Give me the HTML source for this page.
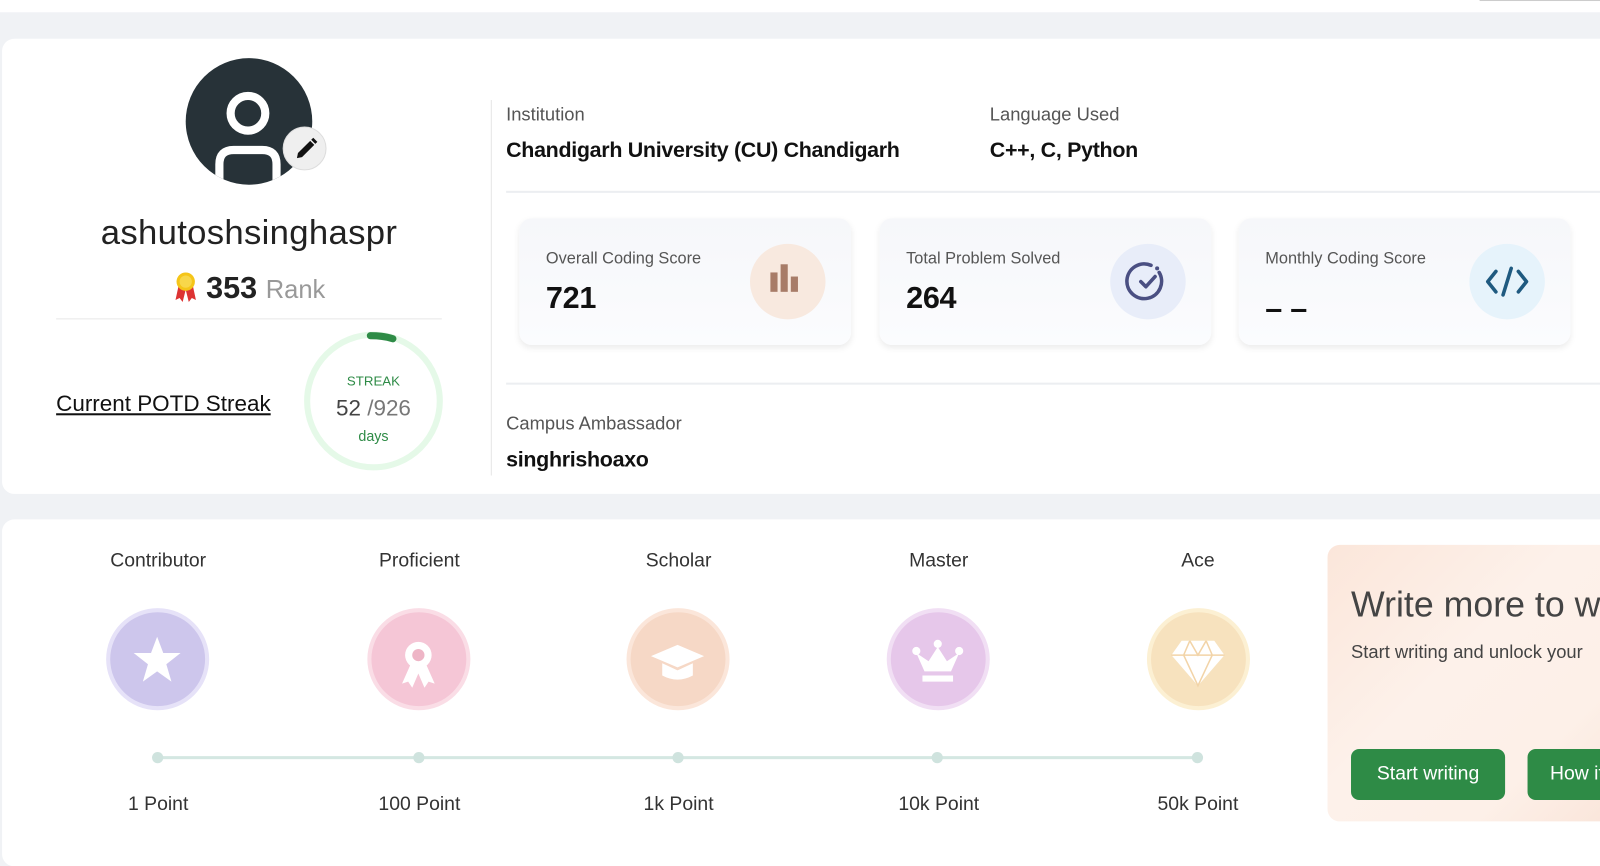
<!DOCTYPE html>
<html><head><meta charset="utf-8"><style>
*{box-sizing:border-box;margin:0;padding:0}
body{width:1600px;height:846px;overflow:hidden;background:#f0f2f5;font-family:"Liberation Sans",sans-serif;color:#222;position:relative}
#w{position:absolute;left:0;top:0;width:1568px;height:830px;transform:scale(1.0204);transform-origin:0 0}
.abs{position:absolute}
.topbar{left:0;top:0;width:1600px;height:12px;background:#fff}
.card{background:#fff;border-radius:12px}
.narrow{font-weight:bold;letter-spacing:-0.3px}
.lbl{font-size:18px;color:#555}
.sc{left:0;width:325px;height:124px;border-radius:12px;background:linear-gradient(#f6f7fa,#fbfcfe);box-shadow:0 3px 6px rgba(0,0,0,.08)}
.sc .t{position:absolute;left:26px;top:31px;font-size:16px;color:#555}
.sc .v{position:absolute;left:26px;top:62px;font-size:30px;color:#111}
.sc .ic{position:absolute;left:226px;top:25px;width:74px;height:74px;border-radius:50%}
.badge{width:101px;height:100px;border-radius:50%;top:596px}
.bt{top:539px;font-size:19px;color:#333;width:200px;text-align:center}
.pt{top:778px;font-size:19px;color:#333;width:200px;text-align:center}
.dot{top:737px;width:11px;height:11px;border-radius:50%;background:#cfe3de}
.btn{background:#2e8b46;color:#fff;font-size:19px;border-radius:8px;height:50px;line-height:50px;text-align:center}
</style></head><body>
<div id="w">
<div class="abs topbar"></div>
<div class="abs" style="left:1450px;top:0;width:150px;height:1px;background:#ccc"></div>
<div class="abs card" style="left:2px;top:38px;width:1610px;height:446px"></div>
<div class="abs card" style="left:2px;top:509px;width:1610px;height:340px"></div>

<div class="abs" style="left:182px;top:57px;width:124px;height:124px;border-radius:50%;background:#273238;overflow:hidden">
<svg width="124" height="124" viewBox="0 0 124 124"><circle cx="61" cy="54" r="17" fill="none" stroke="#fff" stroke-width="8"/><path d="M33 124 V104 Q33 90 47 90 H75 Q89 90 89 104 V124" fill="none" stroke="#fff" stroke-width="8"/></svg>
</div>
<div class="abs" style="left:277px;top:124px;width:43px;height:43px;border-radius:50%;background:#efefef;border:1px solid #ddd">
<svg width="43" height="43" viewBox="0 0 43 43"><path d="M13 30 L14 25 L26 13 L30 17 L18 29 Z" fill="#111"/><path d="M27 12 L29 10 L33 14 L31 16Z" fill="#111"/></svg>
</div>
<div class="abs" style="left:40px;top:209px;width:408px;text-align:center;font-size:34px;color:#222;letter-spacing:.3px">ashutoshsinghaspr</div>
<div class="abs" style="left:170px;top:264px;width:24px;height:34px">
<svg width="24" height="34" viewBox="0 0 24 34"><path d="M5 16 L2 30 L6 28 L9 32 L12 20Z M19 16 L22 30 L18 28 L15 32 L12 20Z" fill="#d33"/><circle cx="12" cy="12" r="9" fill="#f5c518"/><circle cx="12" cy="12" r="6" fill="#f8d74a"/></svg>
</div>
<div class="abs" style="left:202px;top:266px;font-size:30px;font-weight:bold;color:#222">353 <span style="font-weight:normal;color:#999;font-size:25px">Rank</span></div>
<div class="abs" style="left:55px;top:312px;width:378px;height:1px;background:#e8e8e8"></div>
<div class="abs" style="left:55px;top:383px;font-size:22px;color:#111;text-decoration:underline">Current POTD Streak</div>
<svg class="abs" style="left:296px;top:321px" width="140" height="142" viewBox="0 0 140 142"><circle cx="70" cy="72" r="65" fill="none" stroke="#e5f9e8" stroke-width="6"/><path d="M67 8 Q80 8 89 11" fill="none" stroke="#2e8b46" stroke-width="7" stroke-linecap="round"/></svg>
<div class="abs" style="left:296px;top:366px;width:140px;text-align:center;font-size:13px;color:#2e8b46">STREAK</div>
<div class="abs" style="left:296px;top:387px;width:140px;text-align:center;font-size:22px;color:#444">52 <span style="color:#777">/926</span></div>
<div class="abs" style="left:296px;top:419px;width:140px;text-align:center;font-size:14px;color:#2e8b46">days</div>

<div class="abs" style="left:481px;top:98px;width:1px;height:368px;background:#e6e6e6"></div>
<div class="abs lbl" style="left:496px;top:102px">Institution</div>
<div class="abs narrow" style="left:496px;top:136px;font-size:21px;color:#111">Chandigarh University (CU) Chandigarh</div>
<div class="abs lbl" style="left:970px;top:102px">Language Used</div>
<div class="abs narrow" style="left:970px;top:136px;font-size:21px;color:#111">C++, C, Python</div>
<div class="abs" style="left:496px;top:187px;width:1110px;height:2px;background:#eceef1"></div>

<div class="abs sc" style="left:509px;top:214px"><div class="t">Overall Coding Score</div><div class="v narrow">721</div>
<div class="ic" style="background:#f8e9df"><svg width="74" height="74" viewBox="0 0 74 74"><rect x="20" y="28" width="7" height="19" fill="#a87c68"/><rect x="30" y="20" width="7" height="27" fill="#a87c68"/><rect x="40" y="32" width="7" height="15" fill="#a87c68"/></svg></div></div>
<div class="abs sc" style="left:862px;top:214px"><div class="t">Total Problem Solved</div><div class="v narrow">264</div>
<div class="ic" style="background:#e8edf9"><svg width="74" height="74" viewBox="0 0 74 74"><path d="M48 28 A17 17 0 1 1 40 21" fill="none" stroke="#4a4f82" stroke-width="3.5" stroke-linecap="round"/><circle cx="46" cy="24" r="2" fill="#4a4f82"/><path d="M30 37 L35 42 L44 32" fill="none" stroke="#4a4f82" stroke-width="3.5" stroke-linecap="round" stroke-linejoin="round"/></svg></div></div>
<div class="abs sc" style="left:1214px;top:214px"><div class="t">Monthly Coding Score</div><div class="v narrow" style="top:72px">– –</div>
<div class="ic" style="background:#e6f3fb"><svg width="74" height="74" viewBox="0 0 74 74"><path d="M26 27 L18 37 L26 47 M48 27 L56 37 L48 47 M41 24 L33 50" fill="none" stroke="#1f5a80" stroke-width="3.5" stroke-linecap="round" stroke-linejoin="round"/></svg></div></div>

<div class="abs" style="left:496px;top:375px;width:1110px;height:2px;background:#eceef1"></div>
<div class="abs lbl" style="left:496px;top:405px">Campus Ambassador</div>
<div class="abs narrow" style="left:496px;top:439px;font-size:21px;color:#111">singhrishoaxo</div>

<div class="abs bt" style="left:55px">Contributor</div>
<div class="abs bt" style="left:311px">Proficient</div>
<div class="abs bt" style="left:565px">Scholar</div>
<div class="abs bt" style="left:820px">Master</div>
<div class="abs bt" style="left:1074px">Ace</div>

<div class="abs badge" style="left:104px;background:#cdc6ec;border:4px solid #e6e2f8"><svg width="93" height="92" viewBox="0 0 93 92"><path d="M46 24 L52 40 L69 40 L55 51 L60 68 L46 58 L32 68 L37 51 L23 40 L40 40Z" fill="#fff"/></svg></div>
<div class="abs badge" style="left:360px;background:#f5c6d6;border:4px solid #fadde6"><svg width="93" height="92" viewBox="0 0 93 92"><path d="M38 52 L30 70 L36 68 L40 74 L46 60 L52 74 L56 68 L62 70 L54 52Z" fill="#fff"/><circle cx="46" cy="42" r="13" fill="#fff"/><circle cx="46" cy="42" r="6" fill="#eeb5c6"/></svg></div>
<div class="abs badge" style="left:614px;background:#f6d8c6;border:4px solid #fbe6da"><svg width="93" height="92" viewBox="0 0 93 92"><path d="M20 43 L46 32 L72 43 L46 54Z" fill="#fff"/><path d="M31 50 L31 62 Q46 70 61 62 L61 50 L46 57Z" fill="#fff"/></svg></div>
<div class="abs badge" style="left:869px;background:#e6c7ea;border:4px solid #f1dff4"><svg width="93" height="92" viewBox="0 0 93 92"><path d="M25 40 L33 58 L59 58 L67 40 L55 48 L46 34 L37 48Z" fill="#fff"/><circle cx="25" cy="38" r="4" fill="#fff"/><circle cx="67" cy="38" r="4" fill="#fff"/><circle cx="46" cy="31" r="4" fill="#fff"/><rect x="31" y="62" width="30" height="6" fill="#fff"/></svg></div>
<div class="abs badge" style="left:1124px;background:#f7e2be;border:4px solid #fcf0d3"><svg width="93" height="92" viewBox="0 0 93 92"><path d="M30 28 L62 28 L72 42 L46 72 L20 42Z" fill="#fff"/><path d="M20 42 L72 42 M38 28 L32 42 L46 72 L60 42 L54 28 M38 28 L46 42 L54 28" fill="none" stroke="#f2d4a8" stroke-width="1.5"/></svg></div>

<div class="abs" style="left:154px;top:741px;width:1020px;height:3px;background:#d4e7e2"></div>
<div class="abs dot" style="left:149px"></div>
<div class="abs dot" style="left:405px"></div>
<div class="abs dot" style="left:659px"></div>
<div class="abs dot" style="left:913px"></div>
<div class="abs dot" style="left:1168px"></div>
<div class="abs pt" style="left:55px">1 Point</div>
<div class="abs pt" style="left:311px">100 Point</div>
<div class="abs pt" style="left:565px">1k Point</div>
<div class="abs pt" style="left:820px">10k Point</div>
<div class="abs pt" style="left:1074px">50k Point</div>

<div class="abs" style="left:1301px;top:534px;width:320px;height:271px;border-radius:12px;background:linear-gradient(135deg,#fbe6da 0%,#fdf1ea 40%,#fdf0e8 70%,#f9e2d6 100%);overflow:hidden">
<div class="abs" style="left:23px;top:39px;font-size:35px;color:#444;white-space:nowrap">Write more to win</div>
<div class="abs" style="left:23px;top:95px;font-size:18px;color:#444;white-space:nowrap">Start writing and unlock your</div>
<div class="abs btn" style="left:23px;top:200px;width:151px">Start writing</div>
<div class="abs btn" style="left:196px;top:200px;width:160px;text-align:left;padding-left:22px">How it works</div>
</div>
</div>
</body></html>
